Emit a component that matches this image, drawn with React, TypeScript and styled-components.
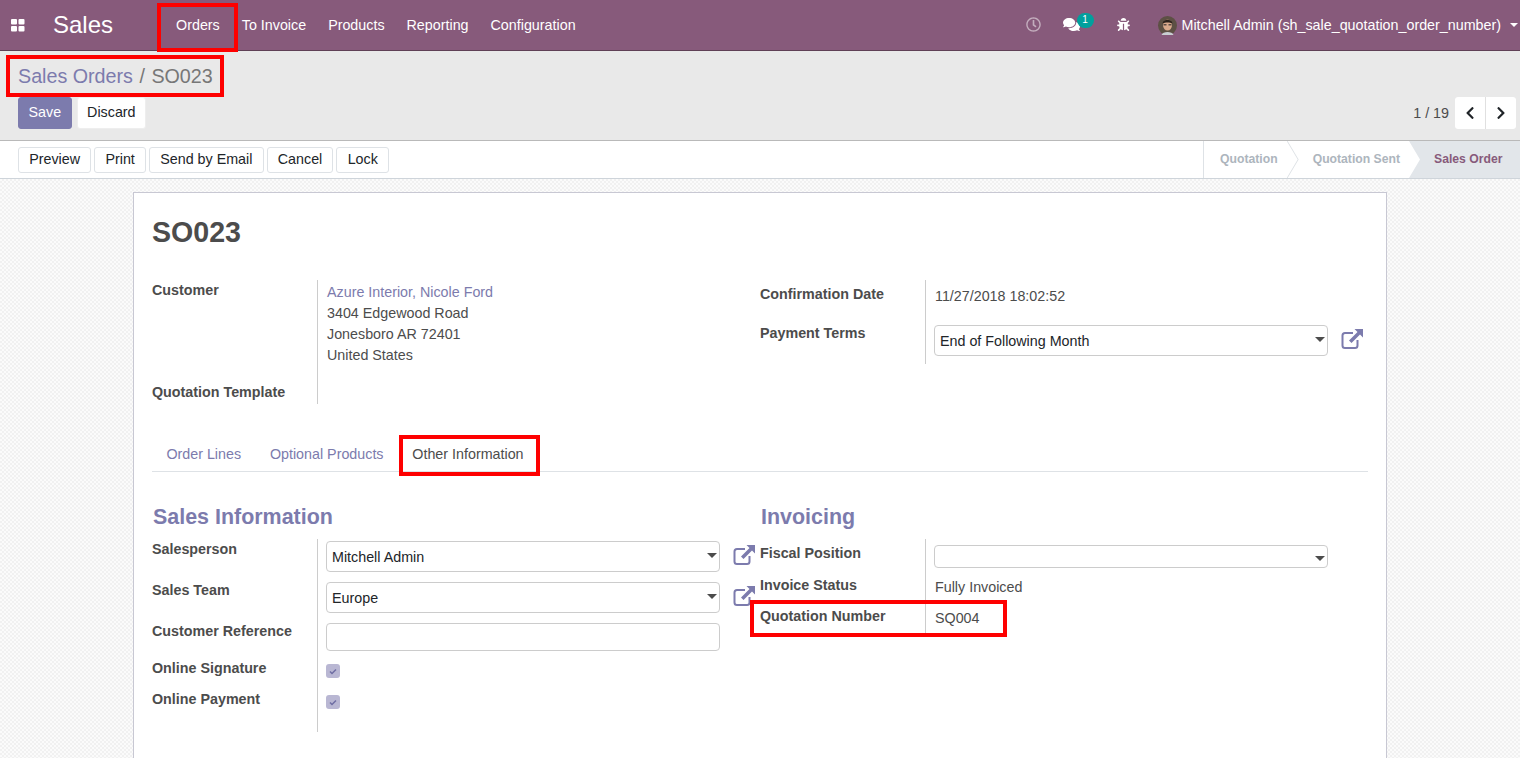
import styled, { createGlobalStyle } from "styled-components";
import { FaBug, FaChevronLeft, FaChevronRight, FaComments, FaRegClock } from "react-icons/fa";

const GlobalStyle = createGlobalStyle`
    html, body {
        margin: 0;
        height: 758px;
        overflow: hidden;
    }
    body {
        font-family: "Liberation Sans", Arial, sans-serif;
        font-size: 14.3px;
        line-height: 21px;
        color: #4c4c4c;
    }
    * {
        box-sizing: border-box;
    }
`;

const Page = styled.div`
    position: relative;
    width: 1520px;
    height: 758px;
    overflow: hidden;
    display: flex;
    flex-direction: column;
`;

const RedBox = styled.div<{ $x: number; $y: number; $w: number; $h: number }>`
    position: absolute;
    left: ${(props) => props.$x}px;
    top: ${(props) => props.$y}px;
    width: ${(props) => props.$w}px;
    height: ${(props) => props.$h}px;
    border: 4px solid #fe0000;
    pointer-events: none;
`;

const NavBar = styled.header`
    flex: none;
    height: 51px;
    background-color: #875a7b;
    border-bottom: 1px solid #5f4056;
    color: #fff;
    display: flex;
    align-items: center;
`;

const AppsIcon = styled.svg`
    width: 14px;
    height: 14px;
    margin-left: 11px;
    fill: #fff;
`;

const AppName = styled.div`
    font-size: 24px;
    margin-left: 28px;
    margin-right: 52px;
    line-height: 30px;
`;

const NavItem = styled.a`
    padding: 0 11px;
`;

const NavRight = styled.div`
    margin-left: auto;
    display: flex;
    align-items: center;
`;

const NavIcon = styled.span<{ $dim?: boolean; $left?: number; $size?: number }>`
    display: flex;
    position: relative;
    margin-left: ${(props) => props.$left || 0}px;
    margin-bottom: 2px;
    font-size: ${(props) => props.$size || 15}px;
    color: #fff;
    opacity: ${(props) => (props.$dim ? 0.5 : 1)};
`;

const Badge = styled.span`
    position: absolute;
    left: 14px;
    top: -3px;
    width: 17px;
    height: 15px;
    border-radius: 8px;
    background-color: #00a09d;
    color: #fff;
    font-size: 10px;
    line-height: 13px;
    text-align: center;
`;

const Avatar = styled.svg`
    margin-left: 28px;
`;

const UserName = styled.span`
    margin-left: 5px;
`;

const UserCaret = styled.span`
    display: inline-block;
    margin: 0 2px 0 9px;
    border-top: 4px solid #fff;
    border-left: 4px solid transparent;
    border-right: 4px solid transparent;
`;

const SelectCaret = styled.span<{ $low?: boolean }>`
    display: inline-block;
    margin: ${(props) => (props.$low ? 3 : -4)}px -3px 0 0;
    border-top: 5px solid #4c4c4c;
    border-left: 5px solid transparent;
    border-right: 5px solid transparent;
`;

const ControlPanel = styled.div`
    flex: none;
    height: 90px;
    background-color: #e9e9e9;
    border-bottom: 1px solid #b9b9b9;
    padding: 10px 4px 0 18px;
`;

const Breadcrumb = styled.div`
    font-size: 19.7px;
    line-height: 30px;
    height: 36px;
    display: flex;
    gap: 6.5px;
    color: #777;
`;

const CrumbLink = styled.a`
    color: #7c7bad;
`;

const PanelRow = styled.div`
    display: flex;
    justify-content: space-between;
    align-items: center;
`;

const ButtonGroup = styled.div`
    display: flex;
    gap: 5px;
`;

const SaveButton = styled.button`
    height: 32px;
    padding: 0 9.5px 1px;
    font: inherit;
    color: #fff;
    background-color: #7c7bad;
    border: 1px solid #7c7bad;
    border-radius: 3px;
`;

const DiscardButton = styled.button`
    height: 32px;
    padding: 0 9.5px 1px;
    font: inherit;
    color: #212529;
    background-color: #fff;
    border: 1px solid #eee;
    border-radius: 3px;
`;

const Pager = styled.div`
    display: flex;
    align-items: center;
    gap: 6px;
`;

const PagerButtons = styled.div`
    display: flex;
    gap: 1px;
    background-color: #e0e0e0;
    border-radius: 3px;
    overflow: hidden;
`;

const PagerButton = styled.button`
    width: 30px;
    height: 32px;
    display: flex;
    align-items: center;
    justify-content: center;
    font-size: 14px;
    color: #212529;
    background-color: #fff;
    border: none;
    padding: 0;
`;

const StatusBar = styled.div`
    flex: none;
    height: 38px;
    background-color: #fff;
    border-bottom: 1px solid #ced4da;
    padding-left: 18px;
    display: flex;
    align-items: center;
    justify-content: space-between;
`;

const ActionButtons = styled.div`
    display: flex;
    gap: 3px;
`;

const ActionButton = styled.button`
    height: 26px;
    padding: 0 10.2px;
    font: inherit;
    line-height: 1;
    color: #212529;
    background-color: #fff;
    border: 1px solid #dee2e6;
    border-radius: 3px;
`;

const Steps = styled.div`
    display: flex;
    align-self: stretch;
    border-left: 1px solid #dee2e6;
`;

const Step = styled.div<{ $first?: boolean }>`
    position: relative;
    display: flex;
    align-items: center;
    padding: 0 9px 0 ${(props) => (props.$first ? 16 : 26)}px;
    font-size: 12.2px;
    font-weight: 700;
    color: #adb5bd;
    &::before {
        content: ${(props) => (props.$first ? "none" : '""')};
        position: absolute;
        left: 0;
        top: 0;
        width: 12px;
        height: 100%;
        background-color: #dee2e6;
        clip-path: polygon(0 0, 1px 0, 12px 50%, 1px 100%, 0 100%, 11px 50%);
    }
`;

const ActiveStep = styled.div`
    display: flex;
    align-items: center;
    width: 111px;
    padding-left: 25px;
    font-size: 12.2px;
    font-weight: 700;
    color: #875a7b;
    background-color: #e2e6ea;
    clip-path: polygon(0 0, 100% 0, 100% 100%, 0 100%, 11px 50%);
`;

const Content = styled.main`
    flex: 1;
    min-height: 0;
    padding-top: 13px;
    background-color: #f7f7f7;
    background-image: repeating-conic-gradient(#f1f1f1 0 25%, #fbfbfb 0 50%);
    background-size: 4px 4px;
`;

const Sheet = styled.div`
    width: 1254px;
    height: 700px;
    margin-left: 133px;
    padding: 21px 18px 0;
    background-color: #fff;
    border: 1px solid #c8c8d3;
`;

const Title = styled.h1`
    margin: 0 0 30px;
    font-size: 28.6px;
    line-height: 36px;
    font-weight: 700;
`;

const Columns = styled.div`
    display: grid;
    grid-template-columns: 608px 608px;
`;

const Group = styled.div`
    display: flex;
    flex-direction: column;
`;

const Row = styled.div<{ $h: number }>`
    display: grid;
    grid-template-columns: 165px 1fr;
    height: ${(props) => props.$h}px;
`;

const Label = styled.div<{ $top?: number }>`
    font-weight: 700;
    padding-top: ${(props) => props.$top || 0}px;
`;

const Value = styled.div<{ $top?: number; $text?: boolean }>`
    border-left: 1px solid #ccc;
    padding-left: ${(props) => (props.$text ? 9 : 8)}px;
    padding-top: ${(props) => props.$top || 0}px;
`;

const Control = styled.div`
    display: flex;
    align-items: flex-start;
`;

const Select = styled.div<{ $h?: number }>`
    width: 394px;
    height: ${(props) => props.$h || 31}px;
    padding: 1px 5px 0;
    display: flex;
    align-items: center;
    justify-content: space-between;
    color: #212529;
    background-color: #fff;
    border: 1px solid #ccc;
    border-radius: 4px;
`;

const TextInput = styled.div`
    width: 394px;
    height: 28px;
    border: 1px solid #ccc;
    border-radius: 4px;
`;

const LinkIcon = styled.svg`
    flex: none;
    width: 22px;
    height: 20px;
    margin: 4px 0 0 13px;
`;

const CheckMark = styled.div`
    width: 14px;
    height: 14px;
    border-radius: 3px;
    background-color: #b9b7d3;
    display: flex;
    align-items: center;
    justify-content: center;
`;

const CustomerLink = styled.div`
    color: #7c7bad;
`;

const Tabs = styled.div`
    display: flex;
    height: 36px;
    margin-top: 32px;
    border-bottom: 1px solid #dee2e6;
`;

const Tab = styled.a<{ $active?: boolean }>`
    padding: 8px 14.4px 0;
    color: ${(props) => (props.$active ? "#4c4c4c" : "#7c7bad")};
`;

const GroupTitle = styled.h2`
    margin: 0;
    height: 67px;
    padding: 32px 0 0 1px;
    font-size: 21.45px;
    line-height: 26px;
    font-weight: 700;
    color: #7c7bad;
`;

function ExternalLink() {
    return (
        <LinkIcon viewBox="0 0 22 20">
            <path
                d="M12 4H4a2.5 2.5 0 0 0-2.5 2.5v10A2.5 2.5 0 0 0 4 19h10a2.5 2.5 0 0 0 2.5-2.5V11"
                fill="none"
                stroke="#7c7bad"
                strokeWidth="2"
            />
            <path d="M13.5 0H22v8.500l-3-3-8.500 8.500-2.500-2.500L16.500 3z" fill="#7c7bad" />
        </LinkIcon>
    );
}

function Checked() {
    return (
        <CheckMark>
            <svg width="8" height="7" viewBox="0 0 8 7">
                <path d="M1 3.500l2 2 4-4" fill="none" stroke="#6f6ea3" strokeWidth="1.500" />
            </svg>
        </CheckMark>
    );
}

function App() {
    return (
        <Page>
            <GlobalStyle />
            <NavBar>
                <AppsIcon viewBox="0 0 14 14">
                    <rect x="0" y="1" width="6" height="5.500" rx="1" />
                    <rect x="7.500" y="1" width="6" height="5.500" rx="1" />
                    <rect x="0" y="8" width="6" height="5.500" rx="1" />
                    <rect x="7.500" y="8" width="6" height="5.500" rx="1" />
                </AppsIcon>
                <AppName>Sales</AppName>
                <NavItem>Orders</NavItem>
                <NavItem>To Invoice</NavItem>
                <NavItem>Products</NavItem>
                <NavItem>Reporting</NavItem>
                <NavItem>Configuration</NavItem>
                <NavRight>
                    <NavIcon $dim><FaRegClock /></NavIcon>
                    <NavIcon $left={22} $size={17}>
                        <FaComments />
                        <Badge>1</Badge>
                    </NavIcon>
                    <NavIcon $left={37} $size={13}><FaBug /></NavIcon>
                    <Avatar width="19" height="19" viewBox="0 0 19 19">
                        <circle cx="9.500" cy="9.500" r="9.500" fill="#5d5044" />
                        <ellipse cx="9.500" cy="9" rx="4.500" ry="5.500" fill="#d9a98c" />
                        <path d="M4.500 7.500C5 2.500 14 2.500 14.500 7.500 12 6 7 6 4.500 7.500z" fill="#2c221c" />
                        <path d="M5.500 8h3v1.500h-3zM10.500 8h3v1.500h-3z" fill="#5b4a42" />
                        <path d="M3.500 19c1-4 11-4 12 0z" fill="#c9ced2" />
                    </Avatar>
                    <UserName>Mitchell Admin (sh_sale_quotation_order_number)</UserName>
                    <UserCaret />
                </NavRight>
            </NavBar>

            <ControlPanel>
                <Breadcrumb>
                    <CrumbLink>Sales Orders</CrumbLink>
                    <span>/</span>
                    <span>SO023</span>
                </Breadcrumb>
                <PanelRow>
                    <ButtonGroup>
                        <SaveButton>Save</SaveButton>
                        <DiscardButton>Discard</DiscardButton>
                    </ButtonGroup>
                    <Pager>
                        <span>1 / 19</span>
                        <PagerButtons>
                            <PagerButton><FaChevronLeft /></PagerButton>
                            <PagerButton><FaChevronRight /></PagerButton>
                        </PagerButtons>
                    </Pager>
                </PanelRow>
            </ControlPanel>

            <StatusBar>
                <ActionButtons>
                    <ActionButton>Preview</ActionButton>
                    <ActionButton>Print</ActionButton>
                    <ActionButton>Send by Email</ActionButton>
                    <ActionButton>Cancel</ActionButton>
                    <ActionButton>Lock</ActionButton>
                </ActionButtons>
                <Steps>
                    <Step $first>Quotation</Step>
                    <Step>Quotation Sent</Step>
                    <ActiveStep>Sales Order</ActiveStep>
                </Steps>
            </StatusBar>

            <Content>
                <Sheet>
                    <Title>SO023</Title>
                    <Columns>
                        <Group>
                            <Row $h={102}>
                                <Label>Customer</Label>
                                <Value $top={2} $text>
                                    <CustomerLink>Azure Interior, Nicole Ford</CustomerLink>
                                    <div>3404 Edgewood Road</div>
                                    <div>Jonesboro AR 72401</div>
                                    <div>United States</div>
                                </Value>
                            </Row>
                            <Row $h={22}>
                                <Label>Quotation Template</Label>
                                <Value />
                            </Row>
                        </Group>
                        <Group>
                            <Row $h={39}>
                                <Label $top={4}>Confirmation Date</Label>
                                <Value $top={6} $text>11/27/2018 18:02:52</Value>
                            </Row>
                            <Row $h={45}>
                                <Label $top={4}>Payment Terms</Label>
                                <Value $top={6}>
                                    <Control>
                                        <Select>
                                            End of Following Month
                                            <SelectCaret />
                                        </Select>
                                        <ExternalLink />
                                    </Control>
                                </Value>
                            </Row>
                        </Group>
                    </Columns>

                    <Tabs>
                        <Tab>Order Lines</Tab>
                        <Tab>Optional Products</Tab>
                        <Tab $active>Other Information</Tab>
                    </Tabs>

                    <Columns>
                        <Group>
                            <GroupTitle>Sales Information</GroupTitle>
                            <Row $h={41}>
                                <Label>Salesperson</Label>
                                <Value $top={2}>
                                    <Control>
                                        <Select>
                                            Mitchell Admin
                                            <SelectCaret />
                                        </Select>
                                        <ExternalLink />
                                    </Control>
                                </Value>
                            </Row>
                            <Row $h={41}>
                                <Label>Sales Team</Label>
                                <Value $top={2}>
                                    <Control>
                                        <Select>
                                            Europe
                                            <SelectCaret />
                                        </Select>
                                        <ExternalLink />
                                    </Control>
                                </Value>
                            </Row>
                            <Row $h={37}>
                                <Label>Customer Reference</Label>
                                <Value $top={2}><TextInput /></Value>
                            </Row>
                            <Row $h={31}>
                                <Label>Online Signature</Label>
                                <Value $top={6}><Checked /></Value>
                            </Row>
                            <Row $h={43}>
                                <Label>Online Payment</Label>
                                <Value $top={6}><Checked /></Value>
                            </Row>
                        </Group>
                        <Group>
                            <GroupTitle>Invoicing</GroupTitle>
                            <Row $h={32}>
                                <Label $top={4}>Fiscal Position</Label>
                                <Value $top={6}>
                                    <Select $h={23}>
                                        <span />
                                        <SelectCaret $low />
                                    </Select>
                                </Value>
                            </Row>
                            <Row $h={31}>
                                <Label $top={4}>Invoice Status</Label>
                                <Value $top={6} $text>Fully Invoiced</Value>
                            </Row>
                            <Row $h={32}>
                                <Label $top={4}>Quotation Number</Label>
                                <Value $top={6} $text>SQ004</Value>
                            </Row>
                        </Group>
                    </Columns>
                </Sheet>
            </Content>

            <RedBox $x={157} $y={3} $w={81} $h={49} />
            <RedBox $x={6} $y={55} $w={218} $h={42} />
            <RedBox $x={399} $y={435} $w={141} $h={41} />
            <RedBox $x={750} $y={600} $w={257} $h={37} />
        </Page>
    );
}

export default App;
